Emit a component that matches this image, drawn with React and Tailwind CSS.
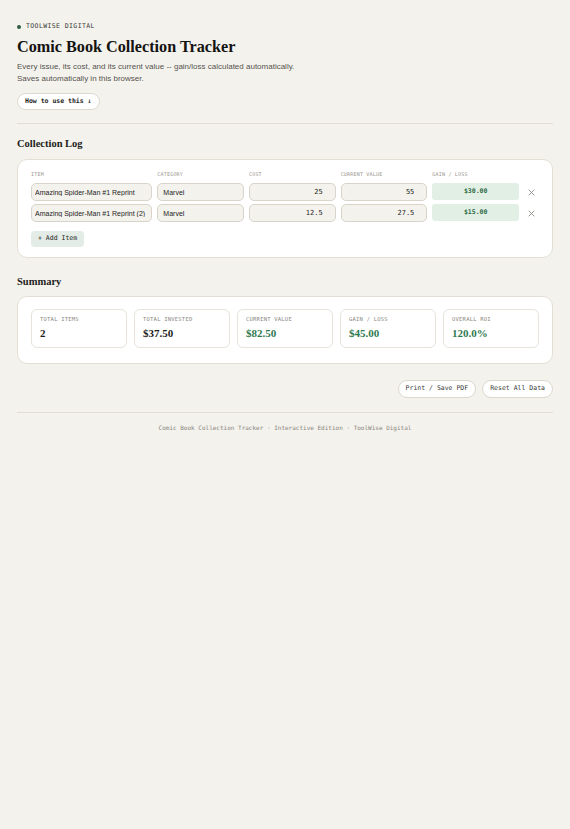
import { useState } from "react";

const serif = "font-['Liberation_Serif',serif]";
const sans = "font-['Liberation_Sans',Arial,sans-serif]";
const mono = "font-['DejaVu_Sans_Mono',monospace]";

const initialItems = [
  { name: "Amazing Spider-Man #1 Reprint", category: "Marvel", cost: "25", value: "55" },
  { name: "Amazing Spider-Man #1 Reprint (2)", category: "Marvel", cost: "12.5", value: "27.5" },
];

const money = (n) => "$" + n.toFixed(2);

function Stat({ label, value, green }) {
  return (
    <div className="h-[39px] rounded-[6px] border border-[#e7e3da] bg-white px-[8px] pt-[6px]">
      <div className={`${mono} text-[5.5px] leading-[7px] tracking-[0.04em] text-[#8a8780]`}>{label}</div>
      <div
        className={`${serif} mt-[3px] text-[11px] font-bold leading-[14px] ${
          green ? "text-[#2f7a4f]" : "text-[#1d1d1b]"
        }`}
      >
        {value}
      </div>
    </div>
  );
}

export default function App() {
  const [items, setItems] = useState(initialItems);

  const invested = items.reduce((s, i) => s + (parseFloat(i.cost) || 0), 0);
  const current = items.reduce((s, i) => s + (parseFloat(i.value) || 0), 0);
  const gain = current - invested;
  const roi = invested ? (gain / invested) * 100 : 0;

  const update = (idx, key, val) =>
    setItems((list) => list.map((it, i) => (i === idx ? { ...it, [key]: val } : it)));

  const inputCls =
    "h-[18px] w-full min-w-0 rounded-[5px] border border-[#d9d4ca] bg-[#f4f2ed] text-[7px] text-[#1d1d1b] outline-none";

  return (
    <div className="min-h-screen bg-[#f4f2ed] px-[17px] pt-[23px] text-[#1d1d1b]">
      {/* Header */}
      <div className="flex h-[8px] items-center gap-[5px]">
        <span className="h-[4px] w-[4px] rounded-full bg-[#2f5e40]" />
        <span className={`${mono} text-[6.5px] tracking-[0.06em] text-[#3a3a37]`}>TOOLWISE DIGITAL</span>
      </div>
      <h1 className={`${serif} mt-[6px] text-[16.2px] font-bold leading-[20px] text-[#141412]`}>
        Comic Book Collection Tracker
      </h1>
      <p className={`${sans} mt-[4px] text-[8px] leading-[12px] text-[#55534e]`}>
        Every issue, its cost, and its current value -- gain/loss calculated automatically.
        <br />
        Saves automatically in this browser.
      </p>
      <button
        type="button"
        className={`${mono} mt-[8px] h-[17px] rounded-full border border-[#dcd8ce] bg-white px-[7px] text-[6.5px] font-bold text-[#1d1d1b]`}
      >
        How to use this ↓
      </button>
      <div className="mt-[13px] border-t border-[#e2ded5]" />

      {/* Collection Log */}
      <h2 className={`${serif} mt-[13px] text-[10.5px] font-bold leading-[14px]`}>Collection Log</h2>
      <div className="mt-[8px] rounded-[10px] border-[1.5px] border-[#e3dfd5] bg-white px-[13px] pb-[10px] pt-[10px]">
        <div className="grid grid-cols-[1.4fr_1fr_1fr_1fr_1fr_15px] gap-x-[5px] gap-y-[3px]">
          {["ITEM", "CATEGORY", "COST", "CURRENT VALUE", "GAIN / LOSS", ""].map((h) => (
            <div
              key={h || "x"}
              className={`${mono} mb-[2px] text-[5px] leading-[8px] tracking-[0.04em] text-[#9a968e]`}
            >
              {h}
            </div>
          ))}
          {items.map((it, idx) => {
            const g = (parseFloat(it.value) || 0) - (parseFloat(it.cost) || 0);
            return [
              <input
                key={"n" + idx}
                className={`${sans} ${inputCls} px-[3px]`}
                value={it.name}
                onChange={(e) => update(idx, "name", e.target.value)}
              />,
              <input
                key={"c" + idx}
                className={`${sans} ${inputCls} px-[5px]`}
                value={it.category}
                onChange={(e) => update(idx, "category", e.target.value)}
              />,
              <input
                key={"k" + idx}
                className={`${mono} ${inputCls} pl-[5px] pr-[12px] text-right`}
                value={it.cost}
                onChange={(e) => update(idx, "cost", e.target.value)}
              />,
              <input
                key={"v" + idx}
                className={`${mono} ${inputCls} pl-[5px] pr-[12px] text-right`}
                value={it.value}
                onChange={(e) => update(idx, "value", e.target.value)}
              />,
              <div
                key={"g" + idx}
                className={`${mono} flex h-[17px] items-center justify-center rounded-[3px] bg-[#e2efe5] text-[6.5px] font-bold text-[#2e6b45]`}
              >
                {money(g)}
              </div>,
              <button
                key={"x" + idx}
                type="button"
                onClick={() => setItems((l) => l.filter((_, i) => i !== idx))}
                className="flex h-[18px] items-center justify-center text-[#8a8780]"
                aria-label="Remove"
              >
                <svg width="7" height="7" viewBox="0 0 10 10" fill="none" stroke="currentColor" strokeWidth="1.2">
                  <path d="M1 1l8 8M9 1l-8 8" />
                </svg>
              </button>,
            ];
          })}
        </div>
        <button
          type="button"
          onClick={() => setItems((l) => [...l, { name: "", category: "", cost: "", value: "" }])}
          className={`${mono} mt-[6px] h-[16px] rounded-[4px] bg-[#e3ece6] px-[7px] text-[6.5px] text-[#1d1d1b]`}
        >
          + Add Item
        </button>
      </div>

      {/* Summary */}
      <h2 className={`${serif} mt-[17px] text-[10.5px] font-bold leading-[14px]`}>Summary</h2>
      <div className="mt-[7px] grid grid-cols-5 gap-[7px] rounded-[10px] border-[1.5px] border-[#e3dfd5] bg-white px-[13px] pb-[15px] pt-[12px]">
        <Stat label="TOTAL ITEMS" value={String(items.length)} />
        <Stat label="TOTAL INVESTED" value={money(invested)} />
        <Stat label="CURRENT VALUE" value={money(current)} green />
        <Stat label="GAIN / LOSS" value={money(gain)} green />
        <Stat label="OVERALL ROI" value={roi.toFixed(1) + "%"} green />
      </div>

      <div className="mt-[16px] flex justify-end gap-[6px]">
        <button
          type="button"
          onClick={() => window.print()}
          className={`${mono} h-[18px] rounded-full border border-[#dcd8ce] bg-white px-[7px] text-[6.5px] text-[#3a3a37]`}
        >
          Print / Save PDF
        </button>
        <button
          type="button"
          onClick={() => setItems([])}
          className={`${mono} h-[18px] rounded-full border border-[#dcd8ce] bg-white px-[7px] text-[6.5px] text-[#3a3a37]`}
        >
          Reset All Data
        </button>
      </div>

      <div className="mt-[14px] border-t border-[#e2ded5]" />
      <p className={`${mono} mt-[11px] text-center text-[6px] leading-[8px] text-[#8a8780]`}>
        Comic Book Collection Tracker · Interactive Edition · ToolWise Digital
      </p>
    </div>
  );
}
